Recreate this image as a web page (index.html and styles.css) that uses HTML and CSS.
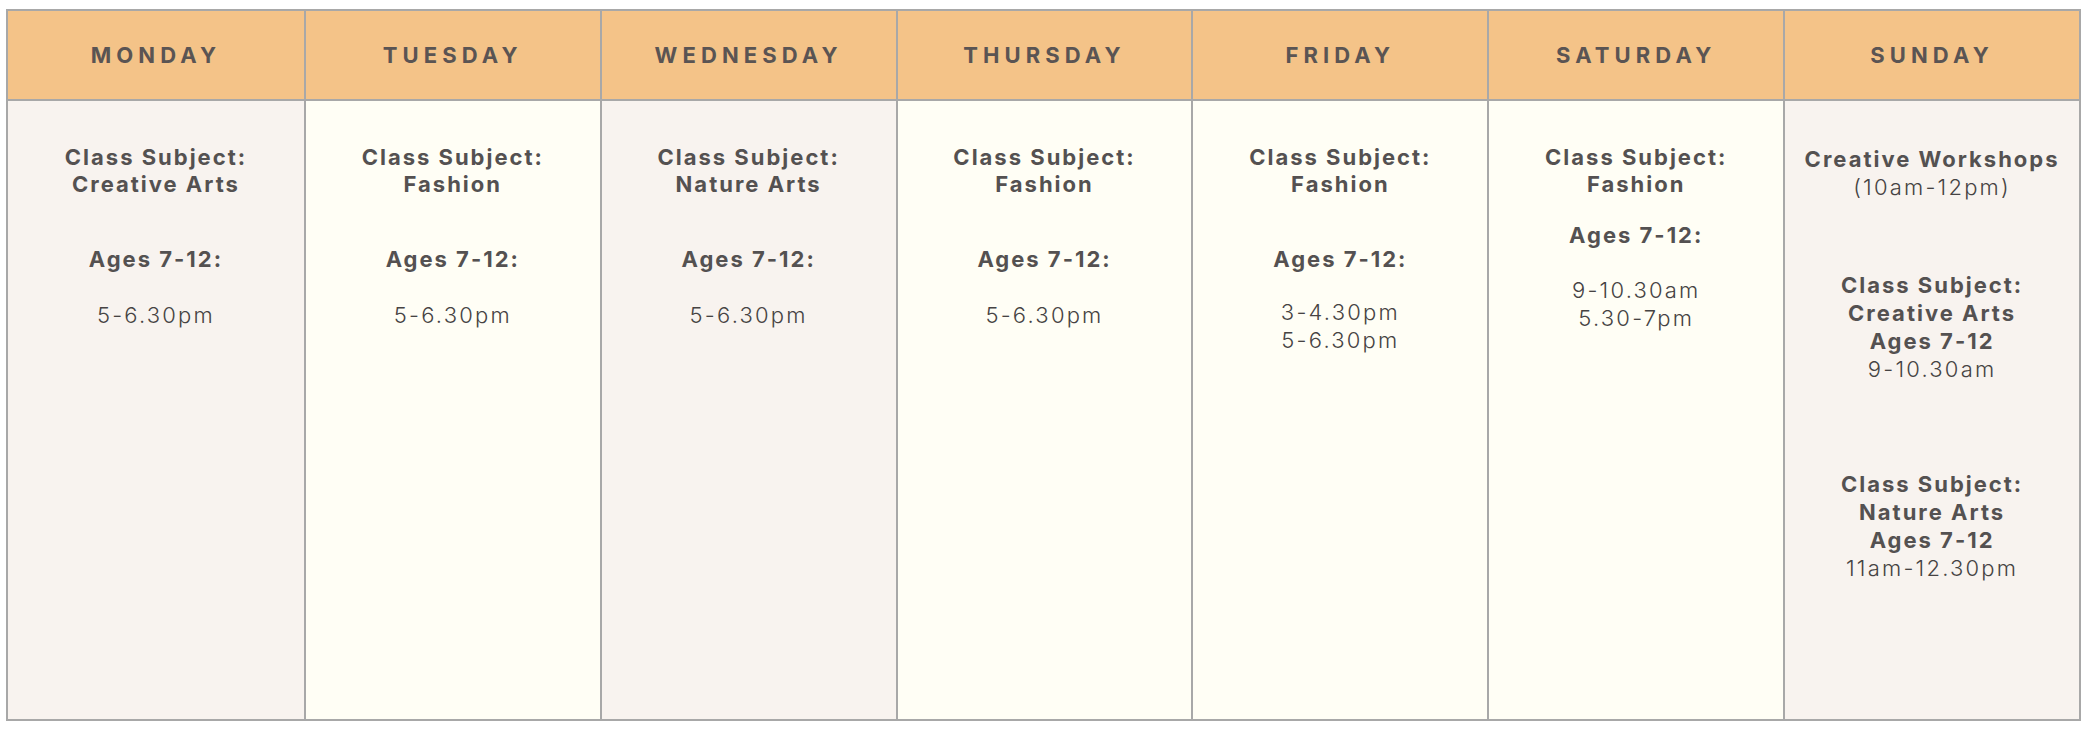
FILE: index.html
```html
<!DOCTYPE html>
<html lang="en">
<head>
<meta charset="utf-8">
<title>Weekly Class Schedule</title>
<link rel="stylesheet" href="styles.css">
</head>
<body>
<div class="schedule">
  <div class="day day--rose">
    <div class="day-head">MONDAY</div>
    <div class="day-body">
      <p class="bold">Class Subject:<br>Creative Arts</p>
      <p class="bold ages">Ages 7-12:</p>
      <p class="time">5-6.30pm</p>
    </div>
  </div>
  <div class="day day--cream">
    <div class="day-head">TUESDAY</div>
    <div class="day-body">
      <p class="bold">Class Subject:<br>Fashion</p>
      <p class="bold ages">Ages 7-12:</p>
      <p class="time">5-6.30pm</p>
    </div>
  </div>
  <div class="day day--rose">
    <div class="day-head">WEDNESDAY</div>
    <div class="day-body">
      <p class="bold">Class Subject:<br>Nature Arts</p>
      <p class="bold ages">Ages 7-12:</p>
      <p class="time">5-6.30pm</p>
    </div>
  </div>
  <div class="day day--cream">
    <div class="day-head">THURSDAY</div>
    <div class="day-body">
      <p class="bold">Class Subject:<br>Fashion</p>
      <p class="bold ages">Ages 7-12:</p>
      <p class="time">5-6.30pm</p>
    </div>
  </div>
  <div class="day day--cream">
    <div class="day-head">FRIDAY</div>
    <div class="day-body">
      <p class="bold">Class Subject:<br>Fashion</p>
      <p class="bold ages">Ages 7-12:</p>
      <p class="time time--tight">3-4.30pm<br>5-6.30pm</p>
    </div>
  </div>
  <div class="day day--cream">
    <div class="day-head">SATURDAY</div>
    <div class="day-body">
      <p class="bold">Class Subject:<br>Fashion</p>
      <p class="bold ages ages--near">Ages 7-12:</p>
      <p class="time time--sat">9-10.30am<br>5.30-7pm</p>
    </div>
  </div>
  <div class="day day--rose">
    <div class="day-head">SUNDAY</div>
    <div class="day-body day-body--sunday">
      <div class="block">
        <p class="bold">Creative Workshops</p>
        <p class="time time--flush">(10am-12pm)</p>
      </div>
      <div class="block block--second">
        <p class="bold">Class Subject:<br>Creative Arts<br>Ages 7-12</p>
        <p class="time time--flush">9-10.30am</p>
      </div>
      <div class="block block--third">
        <p class="bold">Class Subject:<br>Nature Arts<br>Ages 7-12</p>
        <p class="time time--flush">11am-12.30pm</p>
      </div>
    </div>
  </div>
</div>
</body>
</html>
```

FILE: styles.css
```css
* {
  box-sizing: border-box;
}

html,
body {
  margin: 0;
  padding: 0;
  background: #ffffff;
}

body {
  padding: 9px 0 0 6px;
  font-family: "Inter", "Open Sans", sans-serif;
  color: #555252;
}

p {
  margin: 0;
}

.schedule {
  width: 2075px;
  height: 712px;
  display: grid;
  grid-template-columns: repeat(7, 1fr);
  border: 2px solid #a8a8a8;
}

.day {
  display: flex;
  flex-direction: column;
  min-width: 0;
}

.day + .day {
  border-left: 2px solid #a8a8a8;
}

.day-head {
  height: 90px;
  flex: none;
  display: flex;
  align-items: center;
  justify-content: center;
  background: #f4c388;
  border-bottom: 2px solid #a8a8a8;
  font-size: 22px;
  font-weight: 700;
  letter-spacing: 5.1px;
  color: #5a5453;
}

.day-body {
  flex: 1;
  padding-top: 43px;
  text-align: center;
}

.day--rose .day-body {
  background: #f8f3ef;
}

.day--cream .day-body {
  background: #fffef5;
}

.bold {
  font-size: 22px;
  line-height: 27px;
  font-weight: 700;
  letter-spacing: 2px;
  color: #545151;
}

.ages {
  margin-top: 48px;
}

.ages--near {
  margin-top: 24px;
}

.time {
  margin-top: 28px;
  font-size: 22px;
  line-height: 28px;
  font-weight: 300;
  letter-spacing: 2.2px;
  color: #464343;
}

.time--tight {
  margin-top: 25px;
}

.time--sat {
  margin-top: 27px;
}

.day-body--sunday {
  padding-top: 44px;
}

.day-body--sunday .bold {
  line-height: 28px;
}

.time--flush {
  margin-top: 0;
}

.block--second {
  margin-top: 70px;
}

.block--third {
  margin-top: 87px;
}
```
